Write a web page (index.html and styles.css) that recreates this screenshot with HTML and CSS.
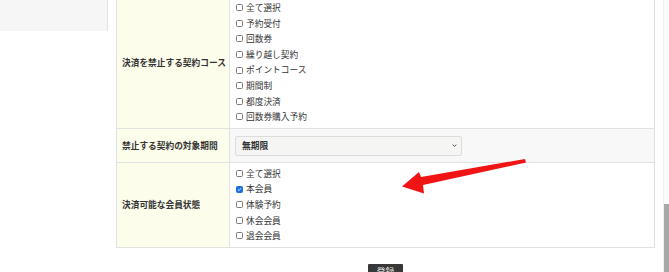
FILE: index.html
```html
<!DOCTYPE html>
<html lang="ja">
<head>
<meta charset="utf-8">
<title>決済設定</title>
<link rel="stylesheet" href="styles.css">
</head>
<body>
<div class="frame">
  <div class="page">
    <div class="sidebar"></div>
    <div class="content">
      <table class="form">
        <tr class="row-course">
          <th>決済を禁止する契約コース</th>
          <td>
            <label class="opt"><input type="checkbox">全て選択</label>
            <label class="opt"><input type="checkbox">予約受付</label>
            <label class="opt"><input type="checkbox">回数券</label>
            <label class="opt"><input type="checkbox">繰り越し契約</label>
            <label class="opt"><input type="checkbox">ポイントコース</label>
            <label class="opt"><input type="checkbox">期間制</label>
            <label class="opt"><input type="checkbox">都度決済</label>
            <label class="opt"><input type="checkbox">回数券購入予約</label>
          </td>
        </tr>
        <tr class="row-period">
          <th>禁止する契約の対象期間</th>
          <td>
            <select class="sel"><option>無期限</option></select>
          </td>
        </tr>
        <tr class="row-status">
          <th>決済可能な会員状態</th>
          <td>
            <label class="opt"><input type="checkbox">全て選択</label>
            <label class="opt"><input type="checkbox" checked>本会員</label>
            <label class="opt"><input type="checkbox">体験予約</label>
            <label class="opt"><input type="checkbox">休会会員</label>
            <label class="opt"><input type="checkbox">退会会員</label>
          </td>
        </tr>
      </table>
      <div class="actions"><button class="btn">登録</button></div>
    </div>
  </div>
  <div class="scrollbar"><div class="thumb"></div></div>
</div>
<svg class="arrow" width="669" height="272" viewBox="0 0 669 272">
  <polygon points="525,159 421,177 419,172 402,186.5 424,193.5 423,185 526,162.5" fill="#f01414"/>
</svg>
</body>
</html>
```

FILE: styles.css
```css
* { box-sizing: border-box; }
html, body {
  margin: 0;
  padding: 0;
  height: 272px;
  overflow: hidden;
  background: #fff;
  font-family: "Noto Sans CJK JP", "Noto Sans", sans-serif;
  color: #333;
  font-size: 8.7px;
}
.frame {
  display: flex;
  height: 272px;
}
.page {
  flex: 1;
  display: flex;
  align-items: flex-start;
  margin-top: -4px;
}
.sidebar {
  width: 108px;
  height: 35px;
  background: #f6f6f6;
  border-right: 1px solid #e2e2e2;
  flex: none;
}
.content {
  margin-left: 8px;
  width: 539px;
  flex: none;
}
.form {
  width: 100%;
  table-layout: fixed;
  border-collapse: collapse;
  border: 1px solid #e1e1e1;
}
.form th, .form td {
  border: 1px solid #e1e1e1;
}
.form th {
  width: 113px;
  background: #fdfdec;
  text-align: left;
  font-weight: bold;
  padding: 0 4px 0 5px;
  vertical-align: middle;
  white-space: nowrap;
}
.form td {
  padding: 3px 6px 3px 6px;
  vertical-align: middle;
}
.row-period td {
  background: #f8f8f8;
  padding: 7px 5px 6px;
}
.opt {
  display: flex;
  align-items: center;
  height: 15.6px;
  line-height: 15.6px;
}
.opt input {
  appearance: none;
  -webkit-appearance: none;
  width: 7px;
  height: 7px;
  margin: 0 3px 0 0;
  border: 1px solid #7a7a7a;
  border-radius: 1.5px;
  background: #fff;
  flex: none;
}
.opt input:checked {
  background: #1b6fe2 url("data:image/svg+xml,%3Csvg xmlns='http://www.w3.org/2000/svg' viewBox='0 0 8 8'%3E%3Cpath d='M1.5 4.2 L3.2 5.8 L6.5 2' stroke='white' stroke-width='1.4' fill='none'/%3E%3C/svg%3E") center / 100% 100% no-repeat;
  border-color: #1b6fe2;
}
.sel {
  appearance: none;
  -webkit-appearance: none;
  display: block;
  width: 227px;
  height: 20px;
  padding: 0 6px;
  border: 1px solid #dcdcdc;
  border-radius: 2px;
  background: #f5f5f3 url("data:image/svg+xml,%3Csvg xmlns='http://www.w3.org/2000/svg' viewBox='0 0 8 8'%3E%3Cpath d='M2 3 L4 5 L6 3' stroke='%23333' stroke-width='1' fill='none'/%3E%3C/svg%3E") right 3px center / 7px 7px no-repeat;
  font-family: inherit;
  font-size: 8.7px;
  font-weight: 600;
  color: #333;
}
.actions {
  display: flex;
  justify-content: center;
  margin-top: 16px;
}
.btn {
  background: #383838;
  color: #e8e8e8;
  border: none;
  border-radius: 1px;
  font-family: inherit;
  font-size: 8.7px;
  padding: 2px 0;
  line-height: 12px;
  width: 35px;
}
.scrollbar {
  width: 6px;
  flex: none;
  display: flex;
  flex-direction: column;
  background: #fbfbfb;
  border-left: 1px solid #eeeeee;
}
.thumb {
  margin-top: auto;
  height: 68px;
  background: #a8a8a8;
}
.arrow {
  position: absolute;
  left: 0;
  top: 0;
  pointer-events: none;
}
```
